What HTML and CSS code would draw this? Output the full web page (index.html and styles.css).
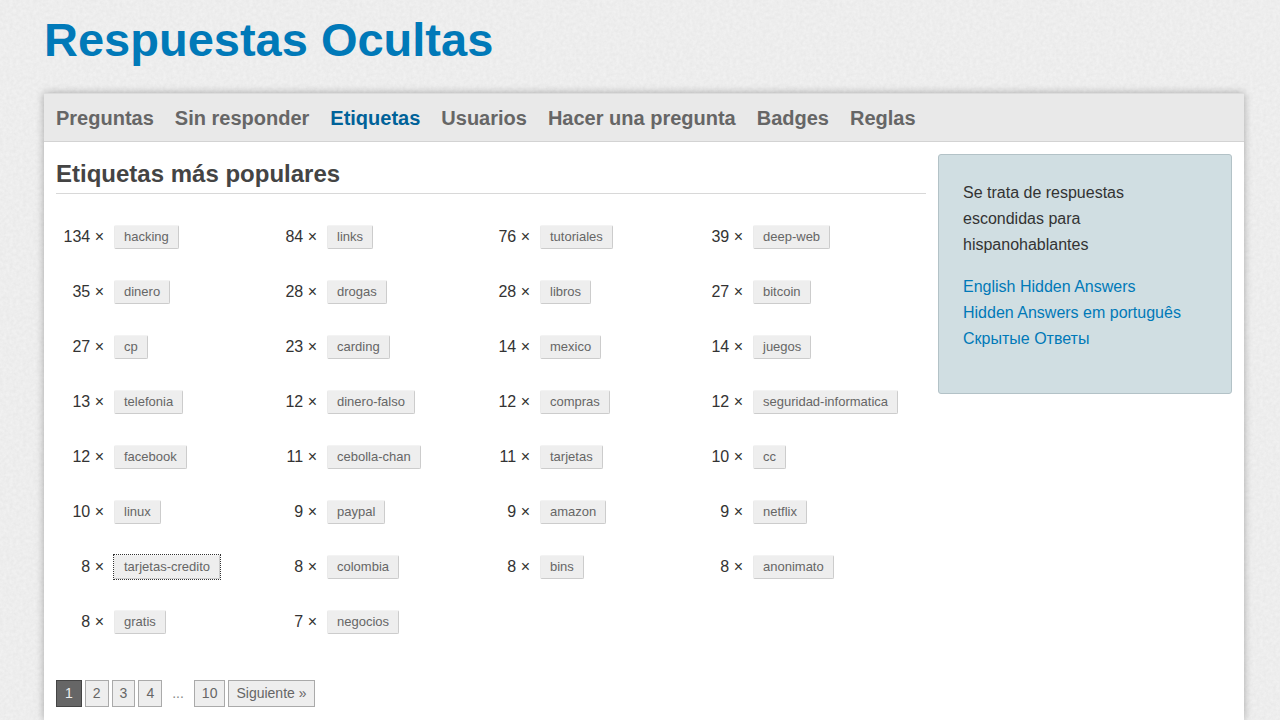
FILE: index.html
```html
<!DOCTYPE html>
<html lang="es">
<head>
<meta charset="utf-8">
<title>Etiquetas más populares - Respuestas Ocultas</title>
<link rel="stylesheet" href="styles.css">
</head>
<body>
<div class="wrapper">
  <header class="site-header"><a class="logo" href="#">Respuestas Ocultas</a></header>
  <div class="page">
    <nav class="nav">
      <a href="#">Preguntas</a>
      <a href="#">Sin responder</a>
      <a class="current" href="#">Etiquetas</a>
      <a href="#">Usuarios</a>
      <a href="#">Hacer una pregunta</a>
      <a href="#">Badges</a>
      <a href="#">Reglas</a>
    </nav>
    <div class="content">
      <main class="main">
        <h1>Etiquetas más populares</h1>
        <ul class="tags">
          <li><span class="count">134 ×</span><a class="tag" href="#">hacking</a></li>
          <li><span class="count">84 ×</span><a class="tag" href="#">links</a></li>
          <li><span class="count">76 ×</span><a class="tag" href="#">tutoriales</a></li>
          <li><span class="count">39 ×</span><a class="tag" href="#">deep-web</a></li>
          <li><span class="count">35 ×</span><a class="tag" href="#">dinero</a></li>
          <li><span class="count">28 ×</span><a class="tag" href="#">drogas</a></li>
          <li><span class="count">28 ×</span><a class="tag" href="#">libros</a></li>
          <li><span class="count">27 ×</span><a class="tag" href="#">bitcoin</a></li>
          <li><span class="count">27 ×</span><a class="tag" href="#">cp</a></li>
          <li><span class="count">23 ×</span><a class="tag" href="#">carding</a></li>
          <li><span class="count">14 ×</span><a class="tag" href="#">mexico</a></li>
          <li><span class="count">14 ×</span><a class="tag" href="#">juegos</a></li>
          <li><span class="count">13 ×</span><a class="tag" href="#">telefonia</a></li>
          <li><span class="count">12 ×</span><a class="tag" href="#">dinero-falso</a></li>
          <li><span class="count">12 ×</span><a class="tag" href="#">compras</a></li>
          <li><span class="count">12 ×</span><a class="tag" href="#">seguridad-informatica</a></li>
          <li><span class="count">12 ×</span><a class="tag" href="#">facebook</a></li>
          <li><span class="count">11 ×</span><a class="tag" href="#">cebolla-chan</a></li>
          <li><span class="count">11 ×</span><a class="tag" href="#">tarjetas</a></li>
          <li><span class="count">10 ×</span><a class="tag" href="#">cc</a></li>
          <li><span class="count">10 ×</span><a class="tag" href="#">linux</a></li>
          <li><span class="count">9 ×</span><a class="tag" href="#">paypal</a></li>
          <li><span class="count">9 ×</span><a class="tag" href="#">amazon</a></li>
          <li><span class="count">9 ×</span><a class="tag" href="#">netflix</a></li>
          <li><span class="count">8 ×</span><a class="tag focused" href="#">tarjetas-credito</a></li>
          <li><span class="count">8 ×</span><a class="tag" href="#">colombia</a></li>
          <li><span class="count">8 ×</span><a class="tag" href="#">bins</a></li>
          <li><span class="count">8 ×</span><a class="tag" href="#">anonimato</a></li>
          <li><span class="count">8 ×</span><a class="tag" href="#">gratis</a></li>
          <li><span class="count">7 ×</span><a class="tag" href="#">negocios</a></li>
        </ul>
        <nav class="pages" aria-label="Páginas">
          <span class="page-link selected">1</span>
          <a class="page-link" href="#">2</a>
          <a class="page-link" href="#">3</a>
          <a class="page-link" href="#">4</a>
          <span class="ellipsis">...</span>
          <a class="page-link" href="#">10</a>
          <a class="page-link" href="#">Siguiente »</a>
        </nav>
      </main>
      <aside class="sidebar">
        <p>Se trata de respuestas escondidas para hispanohablantes</p>
        <p><a href="#">English Hidden Answers</a><br>
        <a href="#">Hidden Answers em português</a><br>
        <a href="#">Скрытые Ответы</a></p>
      </aside>
    </div>
  </div>
</div>
</body>
</html>
```
FILE: styles.css
```css
* { box-sizing: border-box; }
html { background: #ececec; }
body {
  margin: 0;
  min-height: 100vh;
  overflow-x: hidden;
  color: #333;
  font: 16px/26px "Liberation Sans", Arial, sans-serif;
  background: #eee url("data:image/svg+xml,%3Csvg xmlns='http://www.w3.org/2000/svg' width='240' height='240'%3E%3Cfilter id='n' x='0' y='0' width='1' height='1' color-interpolation-filters='sRGB'%3E%3CfeTurbulence type='fractalNoise' baseFrequency='.3' numOctaves='3' seed='4' stitchTiles='stitch'/%3E%3CfeColorMatrix values='.05 0 0 0 .905 .05 0 0 0 .905 .05 0 0 0 .905 0 0 0 0 1'/%3E%3C/filter%3E%3Crect width='240' height='240' filter='url(%23n)'/%3E%3C/svg%3E");
}
a { color: #0079b8; text-decoration: none; }
.wrapper {
  display: flex;
  flex-direction: column;
  min-height: 100vh;
  margin: 0 36px 0 44px;
}
.site-header { padding: 12px 0 25px; }
.logo { font-weight: bold; font-size: 47px; line-height: 56px; }
.page {
  flex: 1;
  background: #fff;
  box-shadow: 0 0 8px rgba(0, 0, 0, 0.3);
}
.nav {
  display: flex;
  gap: 21px;
  padding: 11px 12px 9px;
  background: #e9e9e9;
  border-top: 1px solid #dcdcdc;
  border-bottom: 1px solid #d3d3d3;
  font-size: 20px;
  font-weight: bold;
  line-height: 27px;
}
.nav a { color: #666; }
.nav .current { color: #006299; }
.content {
  display: flex;
  align-items: flex-start;
  gap: 12px;
  padding: 12px;
}
.main { flex: 1; }
h1 {
  margin: 0;
  padding: 4px 0;
  border-bottom: 1px solid #d8d8d8;
  color: #444;
  font-size: 24px;
  line-height: 31px;
}
.tags {
  display: grid;
  grid-template-columns: repeat(4, 1fr);
  grid-auto-rows: 55px;
  margin: 15px 18px 0 0;
  padding: 0;
  list-style: none;
}
.tags li { display: flex; align-items: center; gap: 10px; }
.count { width: 48px; text-align: right; }
.tag {
  margin-top: 1px;
  padding: 2px 9px;
  border: 1px solid;
  border-color: #f3f3f3 #ccc #ccc #eaeaea;
  border-radius: 2px;
  background: #eee;
  color: #666;
  font-size: 13px;
  line-height: 18px;
}
.focused { outline: 1px dotted #333; border-radius: 0; }
.pages {
  display: flex;
  gap: 3px;
  margin-top: 31px;
  color: #888;
  font-size: 14px;
  line-height: 25px;
}
.page-link {
  padding: 0 7px;
  border: 1px solid #aaa;
  background: #eee;
  color: #666;
}
.selected { padding: 0 8px; background: #666; border-color: #444; color: #eee; }
.ellipsis { padding: 1px 7px; }
.sidebar {
  width: 294px;
  padding: 25px 24px;
  border: 1px solid #b3c2c7;
  border-radius: 3px;
  background: #d0dee2;
}
.sidebar p { margin: 0 0 16px; }
```
